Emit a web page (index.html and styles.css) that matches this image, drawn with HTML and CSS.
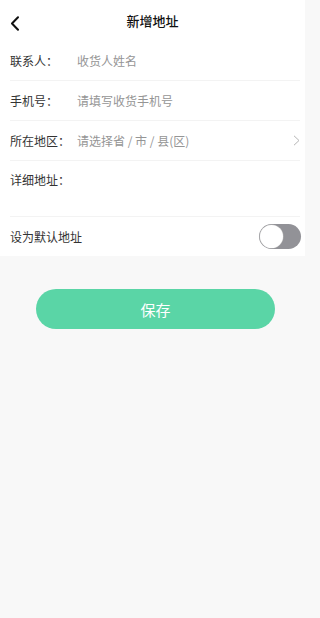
FILE: index.html
```html
<!DOCTYPE html>
<html lang="zh-CN">
<head>
<meta charset="utf-8">
<title>新增地址</title>
<link rel="stylesheet" href="styles.css">
</head>
<body>
<header class="header">
  <span class="back">
    <svg width="10" height="15" viewBox="0 0 10 15"><path d="M8 1.2 L2 7.5 L8 13.8" fill="none" stroke="#111" stroke-width="2" stroke-linecap="round" stroke-linejoin="round"/></svg>
  </span>
  <h1 class="title">新增地址</h1>
</header>
<section class="form">
  <div class="row">
    <span class="label">联系人：</span>
    <span class="ph">收货人姓名</span>
  </div>
  <div class="row">
    <span class="label">手机号：</span>
    <span class="ph">请填写收货手机号</span>
  </div>
  <div class="row">
    <span class="label">所在地区：</span>
    <span class="ph grow">请选择省 / 市 / 县(区)</span>
    <svg class="arrow" width="7" height="11" viewBox="0 0 7 11"><path d="M1 0.8 L6 5.5 L1 10.2" fill="none" stroke="#b5b5b5" stroke-width="1"/></svg>
  </div>
  <div class="row row-tall">
    <span class="label">详细地址：</span>
  </div>
  <div class="row row-last">
    <span class="label grow">设为默认地址</span>
    <span class="switch"><span class="knob"></span></span>
  </div>
</section>
<div class="actions">
  <button class="save">保存</button>
</div>
</body>
</html>
```

FILE: styles.css
```css
* { box-sizing: border-box; }
html, body { margin: 0; padding: 0; }
body {
  background: #f8f8f8;
  font-family: "Noto Sans CJK SC", "Noto Sans", sans-serif;
  color: #333;
  width: 305px;
  min-height: 618px;
}
.header {
  height: 41px;
  background: #fff;
  display: flex;
  align-items: center;
  justify-content: center;
  position: relative;
}
.back {
  position: absolute;
  left: 10px;
  top: 16px;
  display: flex;
}
.title {
  margin: 0;
  font-size: 13px;
  font-weight: 500;
  color: #111;
  line-height: 1;
}
.form {
  background: #fff;
  padding: 0 5px 0 10px;
}
.row {
  height: 40px;
  display: flex;
  align-items: center;
  border-bottom: 1px solid #f3f3f3;
  font-size: 12px;
}
.row-tall {
  height: 56px;
  align-items: flex-start;
  padding-top: 10px;
}
.row-last {
  height: 39px;
  border-bottom: none;
}
.label {
  width: 67px;
  color: #333;
  flex: none;
}
.ph { color: #959595; }
.grow { flex: 1; }
.switch {
  width: 42px;
  height: 25px;
  border-radius: 13px;
  background: #929297;
  display: flex;
  align-items: center;
  padding-left: 1px;
  margin-right: -1px;
}
.knob {
  width: 23px;
  height: 23px;
  border-radius: 50%;
  background: #fff;
  box-shadow: 0 0 0 0.5px #bbb;
}
.actions {
  padding: 33px 0 0 36px;
}
.save {
  width: 239px;
  height: 40px;
  border: none;
  border-radius: 20px;
  background: #5ad5a6;
  color: #fff;
  font-family: inherit;
  font-size: 15px;
  padding: 0;
}
```
